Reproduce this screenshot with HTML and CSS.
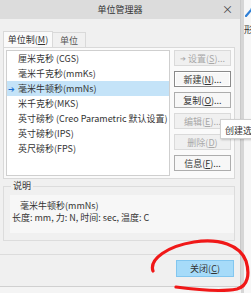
FILE: index.html
```html
<!DOCTYPE html>
<html>
<head>
<meta charset="utf-8">
<link rel="stylesheet" href="styles.css">
</head>
<body>
<div class="screen">
  <div class="dialog">
    <div class="titlebar"><span class="title">单位管理器</span><span class="close">×</span></div>
    <div class="tabs">
      <div class="tab active">单位制(<u>M</u>)</div>
      <div class="tab second">单位</div>
    </div>
    <div class="page">
      <div class="list">
        <div class="item">厘米克秒 (CGS)</div>
        <div class="item">毫米千克秒(mmKs)</div>
        <div class="item sel"><span class="arrow">➔</span>毫米牛顿秒(mmNs)</div>
        <div class="item">米千克秒(MKS)</div>
        <div class="item">英寸磅秒 (Creo Parametric 默认设置)</div>
        <div class="item">英寸磅秒(IPS)</div>
        <div class="item">英尺磅秒(FPS)</div>
      </div>
      <div class="buttons">
        <div class="btn dis"><span class="barrow">➔</span> 设置(<u>S</u>)...</div>
        <div class="btn def">新建(<u>N</u>)...</div>
        <div class="btn">复制(<u>O</u>)...</div>
        <div class="btn dis">编辑(<u>E</u>)...</div>
        <div class="btn dis">删除(<u>D</u>)</div>
        <div class="btn">信息(<u>F</u>)...</div>
      </div>
    </div>
    <div class="group">
      <div class="glabel">说明</div>
      <div class="ginner">
        <div class="gname">毫米牛顿秒(mmNs)</div>
        <div class="gdesc">长度: mm, 力: N, 时间: sec, 温度: C</div>
      </div>
    </div>
    <div class="sep"></div>
    <div class="footer"><div class="closebtn">关闭(<u>C</u>)</div></div>
  </div>
  <div class="side">
    <svg class="sicon" width="9" height="10" viewBox="0 0 9 10"><path d="M1 9 L7 2" stroke="#2f7fd6" stroke-width="2.2" stroke-linecap="round"/><circle cx="7" cy="2" r="1.6" fill="#7ab8ee"/></svg>
    <div class="stext">形斗</div>
  </div>
  <div class="tooltip">创建选</div>
  <svg class="mark" width="251" height="293" viewBox="0 0 251 293"><path d="M153 271 C149 259 168 246 194 242 C219 238 240 245 246 261 C250 274 248 286 237 289 C222 292 198 290 176 287" fill="none" stroke="#f01818" stroke-width="3.2" stroke-linecap="round"/></svg>
</div>
</body>
</html>
```
FILE: styles.css
```css
html, body { margin: 0; padding: 0; }
body {
  width: 251px; height: 293px; overflow: hidden;
  background: #f4f4f4;
  font-family: "Noto Sans CJK SC", "Microsoft YaHei", sans-serif;
  font-size: 9px; color: #333;
}
u { text-decoration: underline; }
.screen { position: relative; width: 251px; height: 293px; display: flex; overflow: hidden; }
.dialog {
  width: 241px; flex: none; height: 287px; background: #f0f0f0;
  border-right: 1px solid #c9c9c9; border-bottom: 1px solid #d0d0d0;
  display: flex; flex-direction: column; box-sizing: border-box;
}
.titlebar {
  height: 19px; flex: none; background: #dcdcdc; position: relative;
  display: flex; align-items: center; justify-content: center;
}
.title { color: #333; font-size: 9px; }
.close { position: absolute; right: 7px; top: 3px; font-size: 11px; color: #444; line-height: 12px; }
.tabs { display: flex; margin-top: 12px; padding-left: 3px; height: 16px; align-items: flex-end; flex: none; }
.tab {
  height: 15px; border: 1px solid #d9d9d9; border-bottom: none; white-space: nowrap;
  display: flex; align-items: center; justify-content: center; color: #555; background: #f0f0f0; box-sizing: border-box;
}
.tab.active { height: 16px; width: 50px; background: #fafafa; color: #333; }
.tab.second { border-left: none; width: 33px; }
.page {
  margin-left: 3px; width: 232px; height: 132px; flex: none; box-sizing: border-box;
  border: 1px solid #d9d9d9; background: #fafafa;
  display: flex; padding: 2px 0 0 2px; gap: 4px;
}
.list {
  width: 164px; height: 126px; box-sizing: border-box; background: #fff;
  border: 1px solid #cfcfcf; padding-top: 0; overflow: hidden;
}
.item { height: 15px; line-height: 15px; padding-left: 11px; white-space: nowrap; color: #333; position: relative; }
.item.sel { background: #c4e3f8; }
.arrow { position: absolute; left: 1px; color: #1e6fd0; font-size: 8px; }
.buttons { display: flex; flex-direction: column; gap: 5px; padding-top: 0; }
.btn {
  width: 57px; height: 16px; box-sizing: border-box; border: 1px solid #adadad; background: #f7f7f7;
  display: flex; align-items: center; justify-content: center; color: #333; white-space: nowrap;
}
.btn.def { box-shadow: inset 0 0 0 1px #fff; border-color: #8a8a8a; }
.btn.dis { color: #a8a8a8; border-color: #dadada; background: #f0f0f0; }
.barrow { color: #a8a8a8; font-size: 7px; margin-right: 2px; }
.group {
  margin: 7px 0 0 3px; width: 232px; height: 55px; flex: none; box-sizing: border-box;
  border: 1px solid #dcdcdc; position: relative; padding: 8px 0 0 6px;
}
.glabel { position: absolute; left: 7px; top: -7px; background: #f0f0f0; padding: 0 2px; color: #333; line-height: 12px; }
.ginner { background: #f7f7f7; height: 38px; }
.gname { padding-left: 10px; line-height: 13px; padding-top: 4px; }
.gdesc { padding-left: 2px; line-height: 12px; white-space: nowrap; }
.sep { margin-top: 13px; height: 1px; background: #dcdcdc; flex: none; }
.footer { display: flex; justify-content: flex-end; padding: 5px 6px 0 0; }
.closebtn {
  width: 58px; height: 17px; box-sizing: border-box; background: #a6dbf9; border: 1px solid #82c6ef;
  display: flex; align-items: center; justify-content: center; color: #333;
}
.side { position: relative; flex: 1; min-width: 0; background: #f7f7f7; border-left: 3px solid #d6d6d6; overflow: hidden; }
.sicon { position: absolute; left: 1px; top: 7px; }
.stext { position: absolute; left: 0; top: 23px; white-space: nowrap; font-size: 9px; color: #333; }
.tooltip {
  position: absolute; left: 220px; top: 119px; width: 40px; height: 20px; box-sizing: border-box;
  background: #fff; border: 1px solid #d0d0d0; box-shadow: 1px 1px 2px rgba(0,0,0,0.2);
  padding: 4px 0 0 4px; white-space: nowrap; color: #333;
}
.mark { position: absolute; left: 0; top: 0; pointer-events: none; }
```
